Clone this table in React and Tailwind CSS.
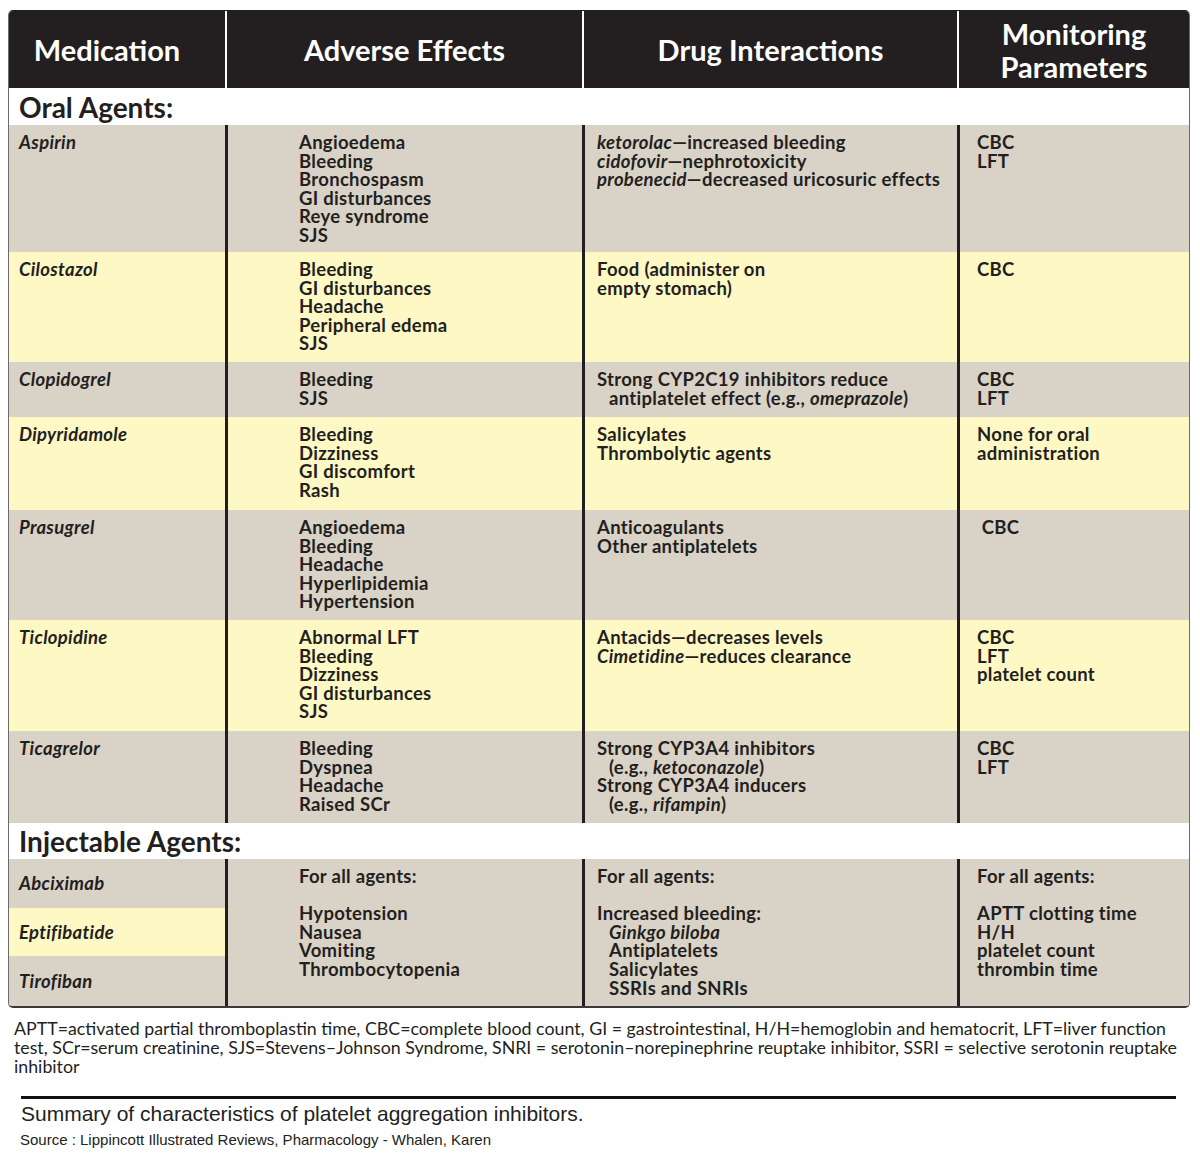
import React from "react";

const GRAY = "bg-[#d9d2c6]";
const YEL = "bg-[#fef8c4]";

const I = ({ children }) => <span className="italic">{children}</span>;
const Ind = ({ children }) => <div className="pl-[12px]">{children}</div>;

const rows = [
  {
    name: "Aspirin",
    bg: GRAY,
    h: "h-[127px]",
    ae: ["Angioedema", "Bleeding", "Bronchospasm", "GI disturbances", "Reye syndrome", "SJS"],
    di: [
      <div key="1"><I>ketorolac</I>—increased bleeding</div>,
      <div key="2"><I>cidofovir</I>—nephrotoxicity</div>,
      <div key="3"><I>probenecid</I>—decreased uricosuric effects</div>,
    ],
    mp: ["CBC", "LFT"],
  },
  {
    name: "Cilostazol",
    bg: YEL,
    h: "h-[110px]",
    ae: ["Bleeding", "GI disturbances", "Headache", "Peripheral edema", "SJS"],
    di: [<div key="1">Food (administer on</div>, <div key="2">empty stomach)</div>],
    mp: ["CBC"],
  },
  {
    name: "Clopidogrel",
    bg: GRAY,
    h: "h-[55px]",
    ae: ["Bleeding", "SJS"],
    di: [
      <div key="1">Strong CYP2C19 inhibitors reduce</div>,
      <Ind key="2">antiplatelet effect (e.g., <I>omeprazole</I>)</Ind>,
    ],
    mp: ["CBC", "LFT"],
  },
  {
    name: "Dipyridamole",
    bg: YEL,
    h: "h-[93px]",
    ae: ["Bleeding", "Dizziness", "GI discomfort", "Rash"],
    di: [<div key="1">Salicylates</div>, <div key="2">Thrombolytic agents</div>],
    mp: ["None for oral", "administration"],
  },
  {
    name: "Prasugrel",
    bg: GRAY,
    h: "h-[110px]",
    ae: ["Angioedema", "Bleeding", "Headache", "Hyperlipidemia", "Hypertension"],
    di: [<div key="1">Anticoagulants</div>, <div key="2">Other antiplatelets</div>],
    mp: ["\u00a0CBC"],
  },
  {
    name: "Ticlopidine",
    bg: YEL,
    h: "h-[111px]",
    ae: ["Abnormal LFT", "Bleeding", "Dizziness", "GI disturbances", "SJS"],
    di: [
      <div key="1">Antacids—decreases levels</div>,
      <div key="2"><I>Cimetidine</I>—reduces clearance</div>,
    ],
    mp: ["CBC", "LFT", "platelet count"],
  },
  {
    name: "Ticagrelor",
    bg: GRAY,
    h: "h-[92px]",
    ae: ["Bleeding", "Dyspnea", "Headache", "Raised SCr"],
    di: [
      <div key="1">Strong CYP3A4 inhibitors</div>,
      <Ind key="2">(e.g., <I>ketoconazole</I>)</Ind>,
      <div key="3">Strong CYP3A4 inducers</div>,
      <Ind key="4">(e.g., <I>rifampin</I>)</Ind>,
    ],
    mp: ["CBC", "LFT"],
  },
];

const GRID = "grid grid-cols-[216px_357px_375px_232px]";
const DIV = "border-l-[3px] border-l-[#231f20]";

function Row({ r }) {
  return (
    <div className={`${GRID} ${r.bg} ${r.h}`}>
      <div className="pl-[10px] pt-[8px] italic">{r.name}</div>
      <div className={`${DIV} pl-[71px] pt-[8px]`}>
        {r.ae.map((t) => (
          <div key={t}>{t}</div>
        ))}
      </div>
      <div className={`${DIV} pl-[12px] pt-[8px]`}>{r.di}</div>
      <div className={`${DIV} pl-[17px] pt-[8px]`}>
        {r.mp.map((t) => (
          <div key={t}>{t}</div>
        ))}
      </div>
    </div>
  );
}

function Section({ title, h }) {
  return (
    <div className={`bg-white ${h} flex items-center pl-[10px] text-[28px] leading-none font-bold tracking-normal`}>
      {title}
    </div>
  );
}

export default function App() {
  return (
    <div className="bg-white w-[1200px] min-h-[1166px] pt-[10px] text-[#231f20]">
      <div
        className="ml-[8px] w-[1182px] rounded-[5px] overflow-hidden border border-[#6b6b6b] border-t-[#231f20] border-b-2 border-b-[#3a3a3a] font-bold text-[18.5px] leading-[18.6px] tracking-[0.3px]"
        style={{ fontFamily: "Lato, 'Open Sans', sans-serif" }}
      >
        {/* header */}
        <div className={`${GRID} bg-[#231f20] text-white h-[77px] text-[29px] leading-[33px] tracking-normal`}>
          <div className="flex items-center justify-center pr-[20px]">Medication</div>
          <div className="flex items-center justify-center border-l-2 border-white">Adverse Effects</div>
          <div className="flex items-center justify-center border-l-2 border-white">Drug Interactions</div>
          <div className="flex flex-col items-center justify-center border-l-2 border-white text-center">
            <div>Monitoring</div>
            <div>Parameters</div>
          </div>
        </div>

        <Section title="Oral Agents:" h="h-[37px]" />
        {rows.map((r) => (
          <Row key={r.name} r={r} />
        ))}
        <Section title="Injectable Agents:" h="h-[36px]" />

        {/* injectable block */}
        <div className={`${GRID} ${GRAY} h-[147px]`}>
          <div className="flex flex-col italic">
            <div className="h-[49px] flex items-center pl-[10px]">Abciximab</div>
            <div className={`h-[48px] flex items-center pl-[10px] ${YEL}`}>Eptifibatide</div>
            <div className="h-[50px] flex items-center pl-[10px]">Tirofiban</div>
          </div>
          <div className={`${DIV} pl-[71px] pt-[8px]`}>
            <div>For all agents:</div>
            <div>&nbsp;</div>
            <div>Hypotension</div>
            <div>Nausea</div>
            <div>Vomiting</div>
            <div>Thrombocytopenia</div>
          </div>
          <div className={`${DIV} pl-[12px] pt-[8px]`}>
            <div>For all agents:</div>
            <div>&nbsp;</div>
            <div>Increased bleeding:</div>
            <Ind><I>Ginkgo biloba</I></Ind>
            <Ind>Antiplatelets</Ind>
            <Ind>Salicylates</Ind>
            <Ind>SSRIs and SNRIs</Ind>
          </div>
          <div className={`${DIV} pl-[17px] pt-[8px]`}>
            <div>For all agents:</div>
            <div>&nbsp;</div>
            <div>APTT clotting time</div>
            <div>H/H</div>
            <div>platelet count</div>
            <div>thrombin time</div>
          </div>
        </div>
      </div>

      {/* footnote */}
      <div
        className="pl-[14px] pr-[4px] mt-[11px] text-[17.8px] leading-[18.8px] text-[#231f20] whitespace-nowrap"
        style={{ fontFamily: "Lato, 'Open Sans', sans-serif" }}
      >
        <div>APTT=activated partial thromboplastin time, CBC=complete blood count, GI = gastrointestinal, H/H=hemoglobin and hematocrit, LFT=liver function</div>
        <div className="tracking-[-0.02px]">test, SCr=serum creatinine, SJS=Stevens–Johnson Syndrome, SNRI = serotonin–norepinephrine reuptake inhibitor, SSRI = selective serotonin reuptake</div>
        <div>inhibitor</div>
      </div>

      <div className="ml-[21px] w-[1155px] h-[3px] bg-[#111] mt-[21px]" />

      <div style={{ fontFamily: "'Liberation Sans', Arial, sans-serif" }} className="text-[#222] whitespace-nowrap">
        <div className="pl-[21px] text-[21px] leading-[24px] mt-[3px]">
          Summary of characteristics of platelet aggregation inhibitors.
        </div>
        <div className="pl-[20px] text-[15px] leading-[18px] mt-[5px]">
          Source : Lippincott Illustrated Reviews, Pharmacology - Whalen, Karen
        </div>
      </div>
    </div>
  );
}
